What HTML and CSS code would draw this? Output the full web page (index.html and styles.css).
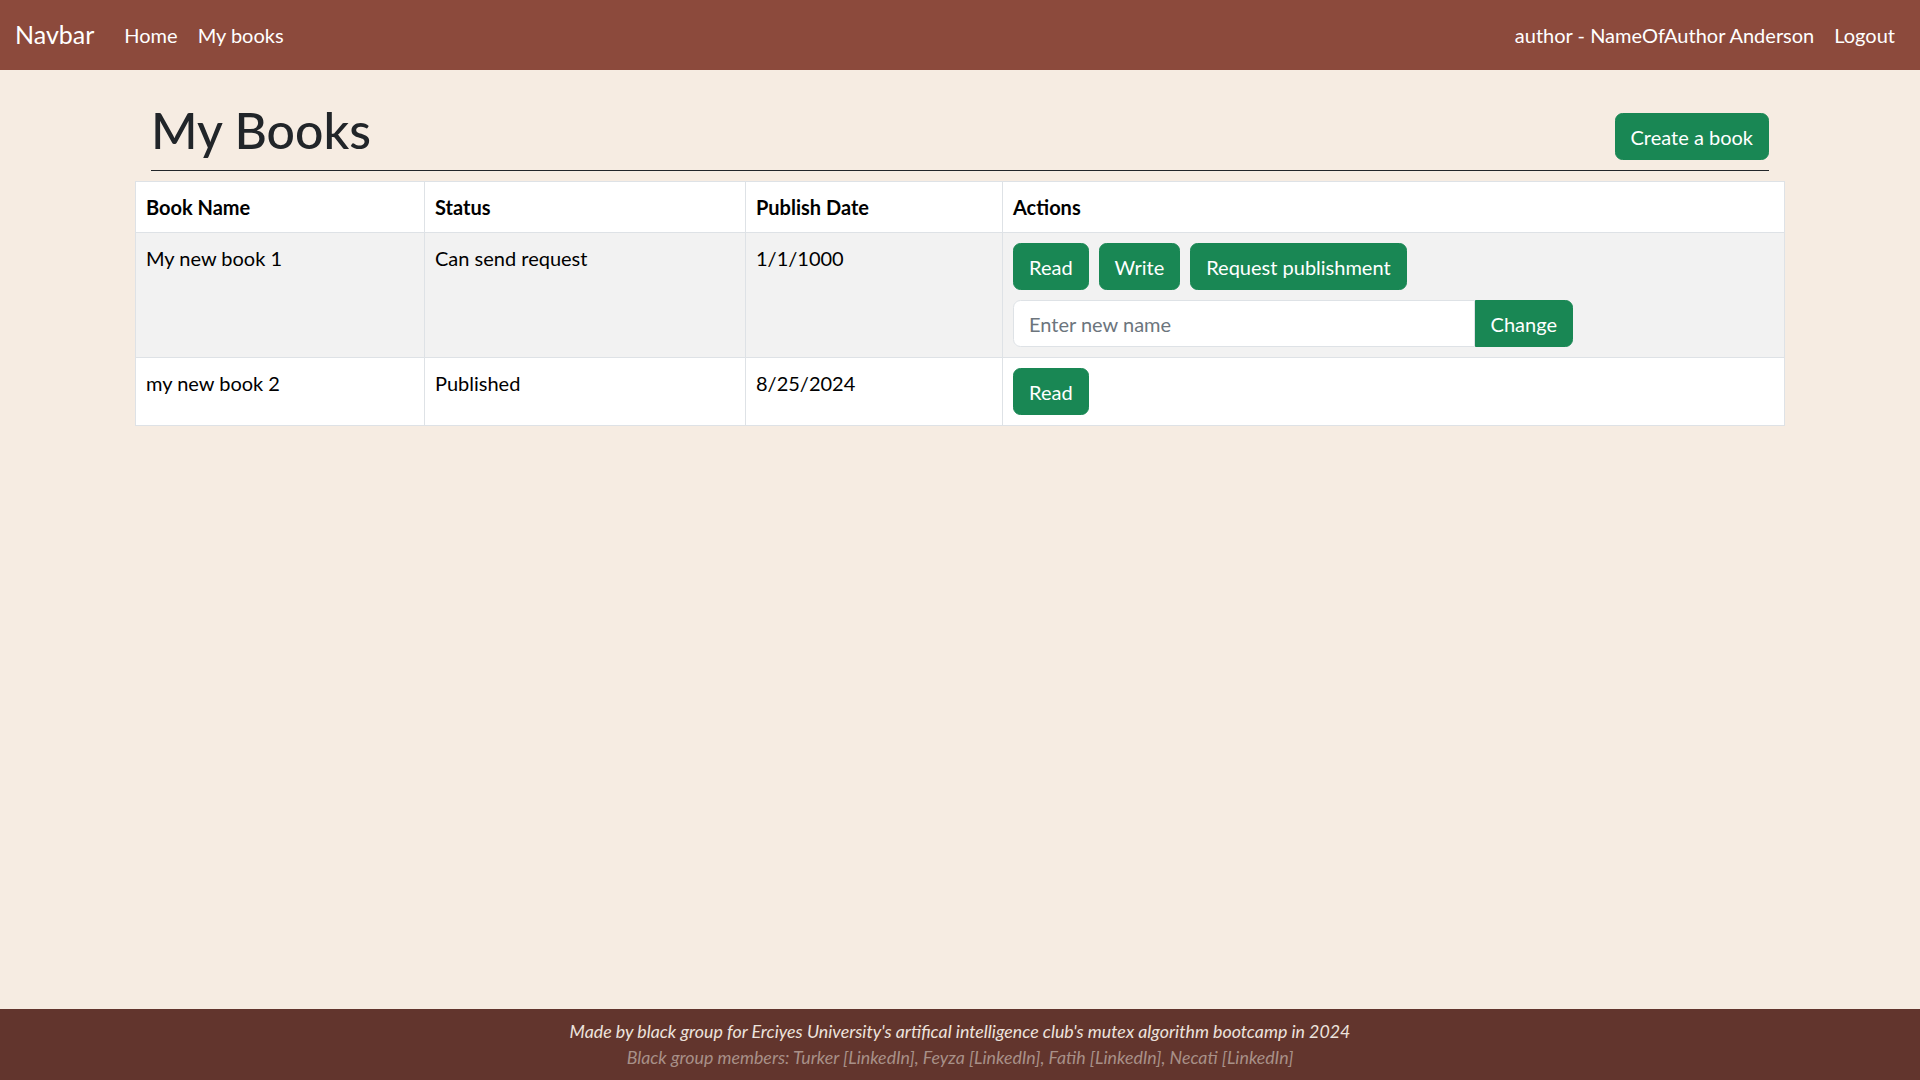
FILE: index.html
```html
<!DOCTYPE html>
<html lang="en">
<head>
<meta charset="utf-8">
<title>My Books</title>
<link rel="stylesheet" href="styles.css">
</head>
<body>
<div class="page">
  <nav class="navbar">
    <div class="nav-left">
      <a class="brand" href="#">Navbar</a>
      <a class="nav-link" href="#">Home</a>
      <a class="nav-link" href="#">My books</a>
    </div>
    <div class="nav-right">
      <span class="nav-link">author - NameOfAuthor Anderson</span>
      <a class="nav-link" href="#">Logout</a>
    </div>
  </nav>

  <main class="main">
    <div class="title-row">
      <h1 class="title">My Books</h1>
      <button class="btn">Create a book</button>
    </div>
    <table class="books">
      <colgroup>
        <col class="c1">
        <col class="c2">
        <col class="c3">
        <col>
      </colgroup>
      <thead>
        <tr>
          <th>Book Name</th>
          <th>Status</th>
          <th>Publish Date</th>
          <th>Actions</th>
        </tr>
      </thead>
      <tbody>
        <tr class="striped">
          <td>My new book 1</td>
          <td>Can send request</td>
          <td>1/1/1000</td>
          <td>
            <div class="btn-row">
              <button class="btn">Read</button>
              <button class="btn">Write</button>
              <button class="btn">Request publishment</button>
            </div>
            <div class="input-group">
              <input class="input" type="text" placeholder="Enter new name">
              <button class="btn btn-append">Change</button>
            </div>
          </td>
        </tr>
        <tr>
          <td>my new book 2</td>
          <td>Published</td>
          <td>8/25/2024</td>
          <td>
            <div class="btn-row">
              <button class="btn">Read</button>
            </div>
          </td>
        </tr>
      </tbody>
    </table>
  </main>

  <footer class="footer">
    <p class="foot1">Made by black group for Erciyes University's artifical intelligence club's mutex algorithm bootcamp in 2024</p>
    <p class="foot2">Black group members: Turker [LinkedIn], Feyza [LinkedIn], Fatih [LinkedIn], Necati [LinkedIn]</p>
  </footer>
</div>
</body>
</html>
```

FILE: styles.css
```css
* { box-sizing: border-box; }
html, body { margin: 0; padding: 0; height: 100%; }
body {
  font-family: Lato, "Open Sans", sans-serif;
  font-size: 20px;
  line-height: 1.5;
  color: #212529;
  background: #f6ece2;
}
.page {
  min-height: 100vh;
  display: flex;
  flex-direction: column;
}
.navbar {
  height: 70px;
  background: #8c4a3c;
  display: flex;
  align-items: center;
  justify-content: space-between;
  padding: 0 15px;
}
.nav-left, .nav-right { display: flex; align-items: center; }
.brand {
  color: #fff;
  font-size: 25px;
  text-decoration: none;
  margin-right: 20px;
  padding: 6px 0;
}
.nav-link {
  color: #fff;
  text-decoration: none;
  padding: 10px;
  font-size: 20px;
}
.main {
  flex: 1;
  padding: 0 135px;
}
.title-row {
  margin: 0 16px;
  display: flex;
  align-items: flex-end;
  justify-content: space-between;
  border-bottom: 1px solid #212529;
  padding: 30px 0 10px 0;
}
.title {
  margin: 0;
  font-size: 50px;
  font-weight: 500;
  line-height: 1.2;
}
.btn {
  font-family: inherit;
  font-size: 20px;
  line-height: 30px;
  color: #fff;
  background: #198754;
  border: 1px solid #198754;
  border-radius: 7.5px;
  padding: 7.5px 15px;
  cursor: pointer;
}
.books {
  width: 100%;
  table-layout: fixed;
  margin-top: 10px;
  border-collapse: collapse;
  background: #fff;
  border: 1px solid #dee2e6;
}
.c1 { width: 289px; }
.c2 { width: 321px; }
.c3 { width: 257px; }
.books th, .books td {
  border: 1px solid #dee2e6;
  padding: 10px;
  text-align: left;
  vertical-align: top;
  color: #000;
}
.books th { font-weight: 700; }
.striped td { background: #f2f2f2; }
.btn-row { display: flex; gap: 10px; }
.input-group {
  display: flex;
  width: 560px;
  margin-top: 10px;
}
.input {
  flex: 1;
  min-width: 0;
  font-family: inherit;
  font-size: 20px;
  line-height: 30px;
  padding: 7.5px 15px;
  border: 1px solid #dee2e6;
  border-radius: 7.5px 0 0 7.5px;
  background: #fff;
  color: #212529;
}
.input::placeholder { color: #6c757d; }
.btn-append { border-radius: 0 7.5px 7.5px 0; }
.footer {
  background: #62352d;
  height: 71px;
  display: flex;
  flex-direction: column;
  align-items: center;
  justify-content: center;
  font-style: italic;
  font-size: 17.8px;
  line-height: 1.45;
}
.footer p { margin: 0; }
.foot1 { color: #ede3dd; }
.foot2 { color: #a89088; }
```
